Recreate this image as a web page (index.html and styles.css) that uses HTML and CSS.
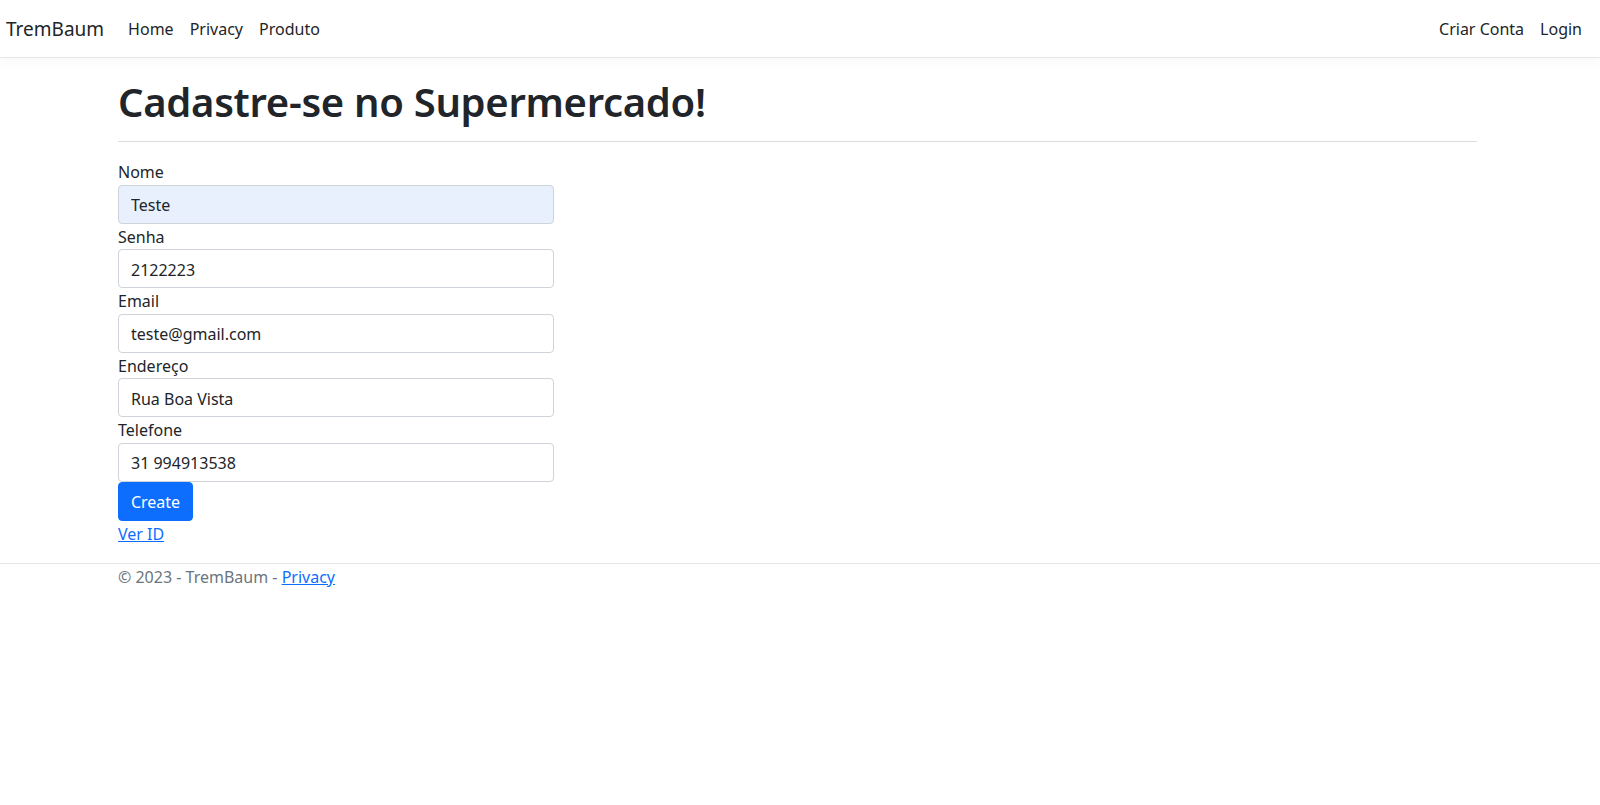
FILE: index.html
```html
<!DOCTYPE html>
<html lang="pt-BR">
<head>
<meta charset="utf-8">
<title>TremBaum</title>
<link rel="stylesheet" href="styles.css">
</head>
<body>
<header class="navbar">
  <a class="brand" href="#">TremBaum</a>
  <ul class="nav-links">
    <li><a href="#">Home</a></li>
    <li><a href="#">Privacy</a></li>
    <li><a href="#">Produto</a></li>
  </ul>
  <ul class="nav-links nav-right">
    <li><a href="#">Criar Conta</a></li>
    <li><a href="#">Login</a></li>
  </ul>
</header>
<main class="container">
  <h1 class="title">Cadastre-se no Supermercado!</h1>
  <hr class="divider">
  <form class="form">
    <label class="label">Nome</label>
    <input class="input input-autofill" type="text" value="Teste">
    <label class="label">Senha</label>
    <input class="input" type="text" value="2122223">
    <label class="label">Email</label>
    <input class="input" type="text" value="teste@gmail.com">
    <label class="label">Endereço</label>
    <input class="input" type="text" value="Rua Boa Vista">
    <label class="label">Telefone</label>
    <input class="input" type="text" value="31 994913538">
    <button class="btn" type="button">Create</button>
  </form>
  <a class="link" href="#">Ver ID</a>
</main>
<footer class="footer">
  <div class="footer-inner">© 2023 - TremBaum - <a class="link" href="#">Privacy</a></div>
</footer>
</body>
</html>
```
FILE: styles.css
```css
* { box-sizing: border-box; }
html, body { margin: 0; padding: 0; background: #fff; }
body {
  font-family: "Noto Sans", "Open Sans", sans-serif;
  font-size: 16px;
  color: #212529;
}
.navbar {
  height: 58px;
  display: flex;
  align-items: center;
  padding: 0 6px;
  border-bottom: 1px solid #e5e5e5;
  box-shadow: 0 4px 12px rgba(0,0,0,0.03);
}
.brand {
  font-size: 19px;
  color: #212529;
  text-decoration: none;
  margin-right: 24px;
}
.nav-links {
  list-style: none;
  display: flex;
  gap: 16px;
  margin: 0;
  padding: 0;
}
.nav-links a {
  color: #212529;
  text-decoration: none;
  font-size: 16px;
}
.nav-right { margin-left: auto; padding-right: 12px; }
.container {
  margin-left: 118px;
  width: 1359px;
  padding-top: 18.5px;
}
.title {
  margin: 0;
  font-size: 40px;
  font-weight: 600;
  line-height: 50px;
  letter-spacing: -0.3px;
}
.divider {
  margin: 14.5px 0 17.2px;
  border: 0;
  border-top: 1px solid #dcdcdc;
}
.form {
  display: flex;
  flex-direction: column;
  align-items: flex-start;
  width: 436px;
}
.label {
  padding-top: 2px;
  line-height: 23.5px;
  font-size: 16px;
}
.input {
  width: 100%;
  height: 39px;
  padding: 2px 12px 0;
  font-family: inherit;
  font-size: 16px;
  color: #212529;
  border: 1px solid #ced4da;
  border-radius: 4px;
  background: #fff;
  outline: none;
}
.input-autofill { background: #e8f0fe; }
.btn {
  height: 39px;
  width: 75px;
  padding: 1px 0 0;
  font-family: inherit;
  font-size: 16px;
  color: #fff;
  background: #0d6efd;
  border: 1px solid #0d6efd;
  border-radius: 4px;
}
.link {
  display: inline-block;
  color: #0d6efd;
  text-decoration: underline;
  line-height: 26px;
}
.footer {
  margin-top: 16.3px;
  border-top: 1px solid #e5e5e5;
}
.footer-inner {
  margin-left: 118px;
  line-height: 26px;
  color: #6c757d;
}
```
